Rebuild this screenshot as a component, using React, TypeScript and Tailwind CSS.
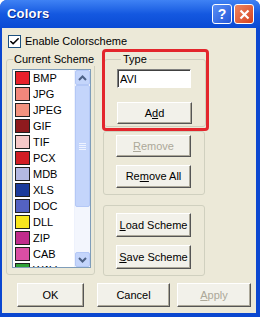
import { Check } from 'lucide-react'

const SCHEME = [
  { name: 'BMP', color: '#e8202a' },
  { name: 'JPG', color: '#f2877c' },
  { name: 'JPEG', color: '#f2937f' },
  { name: 'GIF', color: '#8e1a1e' },
  { name: 'TIF', color: '#f6c8c8' },
  { name: 'PCX', color: '#d11d24' },
  { name: 'MDB', color: '#b3b8e2' },
  { name: 'XLS', color: '#1c3c9c' },
  { name: 'DOC', color: '#5462c2' },
  { name: 'DLL', color: '#f8e61e' },
  { name: 'ZIP', color: '#c02c8c' },
  { name: 'CAB', color: '#da4ea4' },
  { name: 'WAV', color: '#2fa236' },
]

const btn =
  'flex items-center justify-center bg-[#f2f1ea] text-[11px] border border-t-white border-l-white border-r-[#555] border-b-[#555] shadow-[inset_-1px_-1px_#aca899]'

function Button({ children, className = '', disabled = false }: { children: React.ReactNode; className?: string; disabled?: boolean }) {
  return (
    <button className={`${btn} ${disabled ? 'text-[#aca899]' : 'text-black'} ${className}`}>
      {children}
    </button>
  )
}

function ScrollArrow({ up }: { up?: boolean }) {
  return (
    <div className="h-[15px] w-[15px] rounded-[2px] border border-[#b4c8f6] bg-[#c4d5fb] flex items-center justify-center">
      <svg width="9" height="6" viewBox="0 0 9 6">
        <path
          d={up ? 'M1 5 L4.5 1.5 L8 5' : 'M1 1 L4.5 4.5 L8 1'}
          fill="none"
          stroke="#4d6185"
          strokeWidth="2"
        />
      </svg>
    </div>
  )
}

export default function App() {
  return (
    <div
      className="w-[260px] h-[317px] flex flex-col bg-[#0b47d0] rounded-t-[7px] overflow-hidden"
      style={{ fontFamily: '"Liberation Sans", Arial, sans-serif' }}
    >
      {/* Title bar */}
      <div className="h-[28px] shrink-0 flex items-center pl-[7px] pr-[6px] bg-gradient-to-b from-[#3f82f4] via-[#1458e0] to-[#0a4ad4]">
        <span className="text-white font-bold text-[13px] tracking-[0.2px] [text-shadow:1px_1px_#0a2a8a]">Colors</span>
        <div className="ml-auto flex gap-[2px]">
          <div className="w-[20px] h-[20px] rounded-[3px] border border-white bg-gradient-to-br from-[#5b8ff5] to-[#2456d8] flex items-center justify-center text-white font-bold text-[14px] leading-none">
            ?
          </div>
          <div className="w-[20px] h-[20px] rounded-[3px] border border-white bg-gradient-to-br from-[#ee8560] to-[#d4401c] flex items-center justify-center">
            <svg width="11" height="11" viewBox="0 0 11 11">
              <path d="M1.5 1.5 L9.5 9.5 M9.5 1.5 L1.5 9.5" stroke="white" strokeWidth="2.2" />
            </svg>
          </div>
        </div>
      </div>

      {/* Body */}
      <div className="flex-1 ml-[2px] mr-[4px] mb-[4px] bg-[#ece9d8] flex flex-col text-[11px] text-black">
        <label className="flex items-center gap-[4px] pl-[6px] pt-[7px] h-[13px] box-content">
          <span className="w-[13px] h-[13px] border border-[#1c5180] bg-white flex items-center justify-center">
            <Check size={11} strokeWidth={3.5} color="#000" />
          </span>
          <span className="leading-none">Enable Colorscheme</span>
        </label>

        <div className="flex mt-[5px] pl-[4px] h-[223px]">
          {/* Current Scheme */}
          <fieldset className="w-[89px] min-w-0 h-[222px] border border-[#d0d0bf] rounded-[3px] pl-[5px] pr-[3px]">
            <legend className="ml-[1px] px-[1px] leading-[13px] whitespace-nowrap">Current Scheme</legend>
            <div className="mt-[3px] h-[199px] flex border border-[#7f9db9] bg-white">
              <ul className="flex-1 overflow-hidden">
                {SCHEME.map(s => (
                  <li key={s.name} className="h-[16px] flex items-center gap-[3px] pl-[2px]">
                    <span className="w-[15px] h-[14px] border border-[#202020]" style={{ background: s.color }} />
                    <span className="leading-none">{s.name}</span>
                  </li>
                ))}
              </ul>
              <div className="w-[16px] flex flex-col bg-[#f3f6fd] border-l border-[#eef2fc]">
                <ScrollArrow up />
                <div className="h-[122px] rounded-[2px] border border-[#b4c8f6] bg-[#c4d5fb] flex flex-col items-center justify-center gap-[1px]">
                  <span className="w-[7px] h-px bg-[#eef3ff]" />
                  <span className="w-[7px] h-px bg-[#eef3ff]" />
                  <span className="w-[7px] h-px bg-[#eef3ff]" />
                  <span className="w-[7px] h-px bg-[#eef3ff]" />
                </div>
                <div className="flex-1" />
                <ScrollArrow />
              </div>
            </div>
          </fieldset>

          {/* Right column */}
          <div className="ml-[8px] w-[103px] flex flex-col">
            <div className="relative">
              <fieldset className="ml-[1px] w-[102px] h-[74px] border border-[#d0d0bf] rounded-[3px] px-[12px]">
                <legend className="ml-[4px] px-[2px] leading-[13px]">Type</legend>
                <input
                  readOnly
                  value="AVI"
                  className="mt-[3px] w-[74px] h-[19px] bg-white border border-t-[#808080] border-l-[#808080] border-r-white border-b-white shadow-[inset_1px_1px_#404040] px-[2px] text-[11px] outline-none"
                  style={{ fontFamily: 'inherit' }}
                />
                <Button className="mt-[14px] w-[75px] h-[22px]">
                  A<u>d</u>d
                </Button>
              </fieldset>
              {/* highlight overlay */}
              <div className="absolute left-[-1px] right-[-3px] top-[-4px] bottom-[-4px] border-[3px] border-[#e3262c] rounded-[4px] pointer-events-none" />
            </div>

            <fieldset className="mt-[4px] w-[102px] h-[64px] border border-[#d0d0bf] rounded-[3px] px-[12px] flex flex-col">
              <Button disabled className="mt-[3px] w-[75px] h-[22px]">
                <u>R</u>emove
              </Button>
              <Button className="mt-[8px] w-[75px] h-[23px]">
                Re<u>m</u>ove All
              </Button>
            </fieldset>

            <fieldset className="mt-[10px] w-[102px] h-[71px] border border-[#d0d0bf] rounded-[3px] px-[12px]">
              <Button className="mt-[7px] w-[75px] h-[24px]">
                <u>L</u>oad Scheme
              </Button>
              <Button className="mt-[8px] w-[75px] h-[24px]">
                <u>S</u>ave Scheme
              </Button>
            </fieldset>
          </div>
        </div>

        {/* Dialog buttons */}
        <div className="flex mt-[7px] pl-[15px] gap-[13px]">
          <Button className="w-[67px] h-[24px]">OK</Button>
          <Button className="w-[73px] h-[24px]">Cancel</Button>
          <Button disabled className="w-[74px] h-[24px] -ml-[6px]">
            <u>A</u>pply
          </Button>
        </div>
      </div>
    </div>
  )
}
